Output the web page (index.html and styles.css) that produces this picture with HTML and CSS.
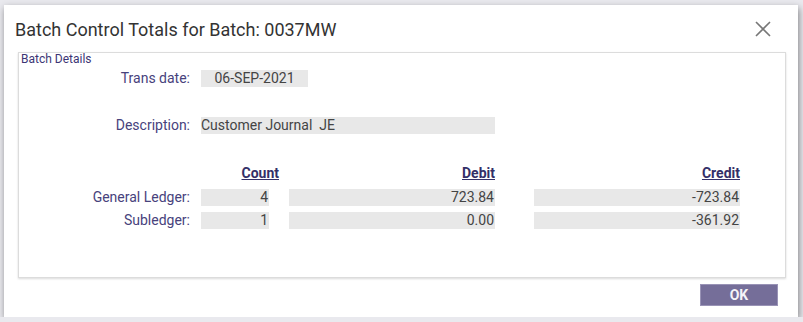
FILE: index.html
```html
<!DOCTYPE html>
<html lang="en">
<head>
    <meta charset="UTF-8">
    <meta name="viewport" content="width=device-width, initial-scale=1.0">
    <title>Batch Control Totals</title>
    <link rel="stylesheet" href="styles.css">
</head>
<body>
    <div class="dialog">
        <!-- Header -->
        <div class="dialog-header">
            <h1>Batch Control Totals for Batch: 0037MW</h1>
            <button class="close-btn" type="button" aria-label="Close">
                <svg width="16" height="16" viewBox="0 0 16 16">
                    <path d="M1 1 L15 15 M15 1 L1 15" stroke="#777" stroke-width="1.6" fill="none"/>
                </svg>
            </button>
        </div>

        <!-- Batch details -->
        <div class="details">
            <div class="legend">Batch Details</div>

            <div class="row row-date">
                <span class="label">Trans date:</span>
                <span class="field field-date">06-SEP-2021</span>
            </div>

            <div class="row row-desc">
                <span class="label">Description:</span>
                <span class="field field-desc">Customer Journal&nbsp; JE</span>
            </div>

            <div class="row row-head">
                <span class="label"></span>
                <span class="col col-count"><u>Count</u></span>
                <span class="col col-debit"><u>Debit</u></span>
                <span class="col col-credit"><u>Credit</u></span>
            </div>

            <div class="row row-total">
                <span class="label">General Ledger:</span>
                <span class="col col-count"><span class="field num count-box">4</span></span>
                <span class="col col-debit"><span class="field num">723.84</span></span>
                <span class="col col-credit"><span class="field num">-723.84</span></span>
            </div>

            <div class="row row-total">
                <span class="label">Subledger:</span>
                <span class="col col-count"><span class="field num count-box">1</span></span>
                <span class="col col-debit"><span class="field num">0.00</span></span>
                <span class="col col-credit"><span class="field num">-361.92</span></span>
            </div>
        </div>

        <!-- Footer -->
        <div class="dialog-footer">
            <button class="ok-btn" type="button">OK</button>
        </div>
    </div>
</body>
</html>
```

FILE: styles.css
```css
/* General Styles */
body {
    font-family: Roboto, "Liberation Sans", Arial, sans-serif;
    background-color: #e9e9ee;
    margin: 0;
    padding: 0;
}

.dialog {
    margin: 5px 5px 0 4px;
    width: 794px;
    height: 312px;
    background: white;
    box-shadow: 1px 3px 7px rgba(0, 0, 0, 0.45);
    display: flex;
    flex-direction: column;
}

/* Header */
.dialog-header {
    display: flex;
    justify-content: space-between;
    align-items: center;
    padding: 13px 27px 0 11px;
}

h1 {
    margin: 0;
    font-size: 18px;
    font-weight: normal;
    line-height: 24px;
    color: #333;
}

.close-btn {
    background: none;
    border: none;
    padding: 0;
    width: 16px;
    height: 16px;
    margin-top: -2px;
    cursor: pointer;
}

.close-btn svg {
    display: block;
}

/* Details box */
.details {
    margin: 10px 12px 0 14px;
    height: 226px;
    box-sizing: border-box;
    border: 1px solid #dcdcdc;
    box-shadow: 0 1px 2px rgba(0, 0, 0, 0.15);
}

.legend {
    padding-left: 2px;
    font-size: 12px;
    line-height: 13px;
    color: #3c3675;
}

.row {
    display: flex;
    align-items: center;
    font-size: 14px;
    line-height: 17px;
}

.row-date {
    margin-top: 4px;
}

.row-desc {
    margin-top: 30px;
}

.row-head {
    margin-top: 31px;
    font-weight: bold;
    color: #342f68;
}

.row-head .col {
    text-align: right;
}

.row-head + .row-total {
    margin-top: 7px;
}

.row-total + .row-total {
    margin-top: 6px;
}

.label {
    width: 171px;
    margin-right: 11px;
    text-align: right;
    color: #47427c;
}

.field {
    display: block;
    height: 17px;
    background-color: #e8e8e8;
    color: #444;
    white-space: pre;
}

.field-date {
    width: 107px;
    text-align: center;
}

.field-desc {
    width: 294px;
}

.col-count {
    width: 78px;
    margin-right: 10px;
}

.col-debit {
    width: 206px;
    margin-right: 39px;
}

.col-credit {
    width: 206px;
}

.num {
    text-align: right;
    padding-right: 1px;
}

.count-box {
    width: 67px;
}

/* Footer */
.dialog-footer {
    display: flex;
    justify-content: flex-end;
    padding: 6px 20px 0 0;
}

.ok-btn {
    width: 78px;
    height: 22px;
    background-color: #756e99;
    border: 1px solid #9993b6;
    color: #f4f4f8;
    font-family: Roboto, "Liberation Sans", Arial, sans-serif;
    font-size: 14px;
    font-weight: bold;
    padding: 0;
    cursor: pointer;
}

.ok-btn:hover {
    background-color: #615a86;
}
```
